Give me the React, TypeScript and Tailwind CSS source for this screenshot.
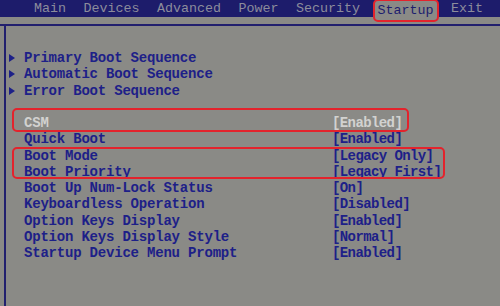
const TABS = ['Main', 'Devices', 'Advanced', 'Power', 'Security', 'Startup', 'Exit'];

const MENUS = ['Primary Boot Sequence', 'Automatic Boot Sequence', 'Error Boot Sequence'];

const SETTINGS = [
  { label: 'CSM', value: '[Enabled]', active: true },
  { label: 'Quick Boot', value: '[Enabled]' },
  { label: 'Boot Mode', value: '[Legacy Only]' },
  { label: 'Boot Priority', value: '[Legacy First]' },
  { label: 'Boot Up Num-Lock Status', value: '[On]' },
  { label: 'Keyboardless Operation', value: '[Disabled]' },
  { label: 'Option Keys Display', value: '[Enabled]' },
  { label: 'Option Keys Display Style', value: '[Normal]' },
  { label: 'Startup Device Menu Prompt', value: '[Enabled]' },
];

function Arrow() {
  return (
    <svg width="6" height="8" viewBox="0 0 6 8" className="shrink-0">
      <polygon points="0,0 6,4 0,8" fill="#1d2088" />
    </svg>
  );
}

export default function App() {
  return (
    <div
      className="relative w-[500px] h-[306px] overflow-hidden bg-[#8a8a86] flex flex-col"
      style={{ fontFamily: '"Liberation Mono", "DejaVu Sans Mono", monospace' }}
    >
      {/* Tab bar */}
      <nav className="h-[17px] shrink-0 bg-[#1d1c6b] flex items-start pl-[34px] gap-[17.5px] text-[13.33px] leading-[17px]">
        {TABS.map((tab) =>
          tab === 'Startup' ? (
            <span
              key={tab}
              className="relative z-10 -mx-[5px] -mt-[1px] h-[23px] px-[3px] bg-[#8a8a86] border-2 border-[#e3232c] rounded-[5px] text-[#1e1e6e] leading-[19px]"
            >
              {tab}
            </span>
          ) : (
            <span key={tab} className="text-[#8c8c9c]">
              {tab}
            </span>
          )
        )}
      </nav>

      {/* Panel */}
      <div className="mt-[7px] flex-1 border-t-2 border-[#22206e] flex">
        <div className="ml-[4px] flex-1 border-l-2 border-[#22206e] pt-[24px] text-[14px] font-bold leading-[16.25px]">
          {MENUS.map((m) => (
            <div key={m} className="flex items-center h-[16.25px]">
              <div className="w-[18px] pl-[3px] flex items-center">
                <Arrow />
              </div>
              <span className="text-[#1d2088] tracking-[-0.2px]">{m}</span>
            </div>
          ))}
          <div className="h-[16.25px]" />
          {SETTINGS.map((s) => (
            <div key={s.label} className="flex h-[16.25px] pl-[18px]">
              <span
                className={`w-[308px] tracking-[-0.2px] ${s.active ? 'text-[#d2d2d0]' : 'text-[#1d2088]'}`}
              >
                {s.label}
              </span>
              <span className={`tracking-[-0.6px] ${s.active ? 'text-[#d2d2d0]' : 'text-[#1d2088]'}`}>
                {s.value}
              </span>
            </div>
          ))}
        </div>
      </div>

      {/* Annotation outlines */}
      <div className="absolute left-[12px] top-[108px] w-[397px] h-[24px] border-2 border-[#e3232c] rounded-[5px]" />
      <div className="absolute left-[12px] top-[147px] w-[433px] h-[32px] border-2 border-[#e3232c] rounded-[5px]" />
    </div>
  );
}
